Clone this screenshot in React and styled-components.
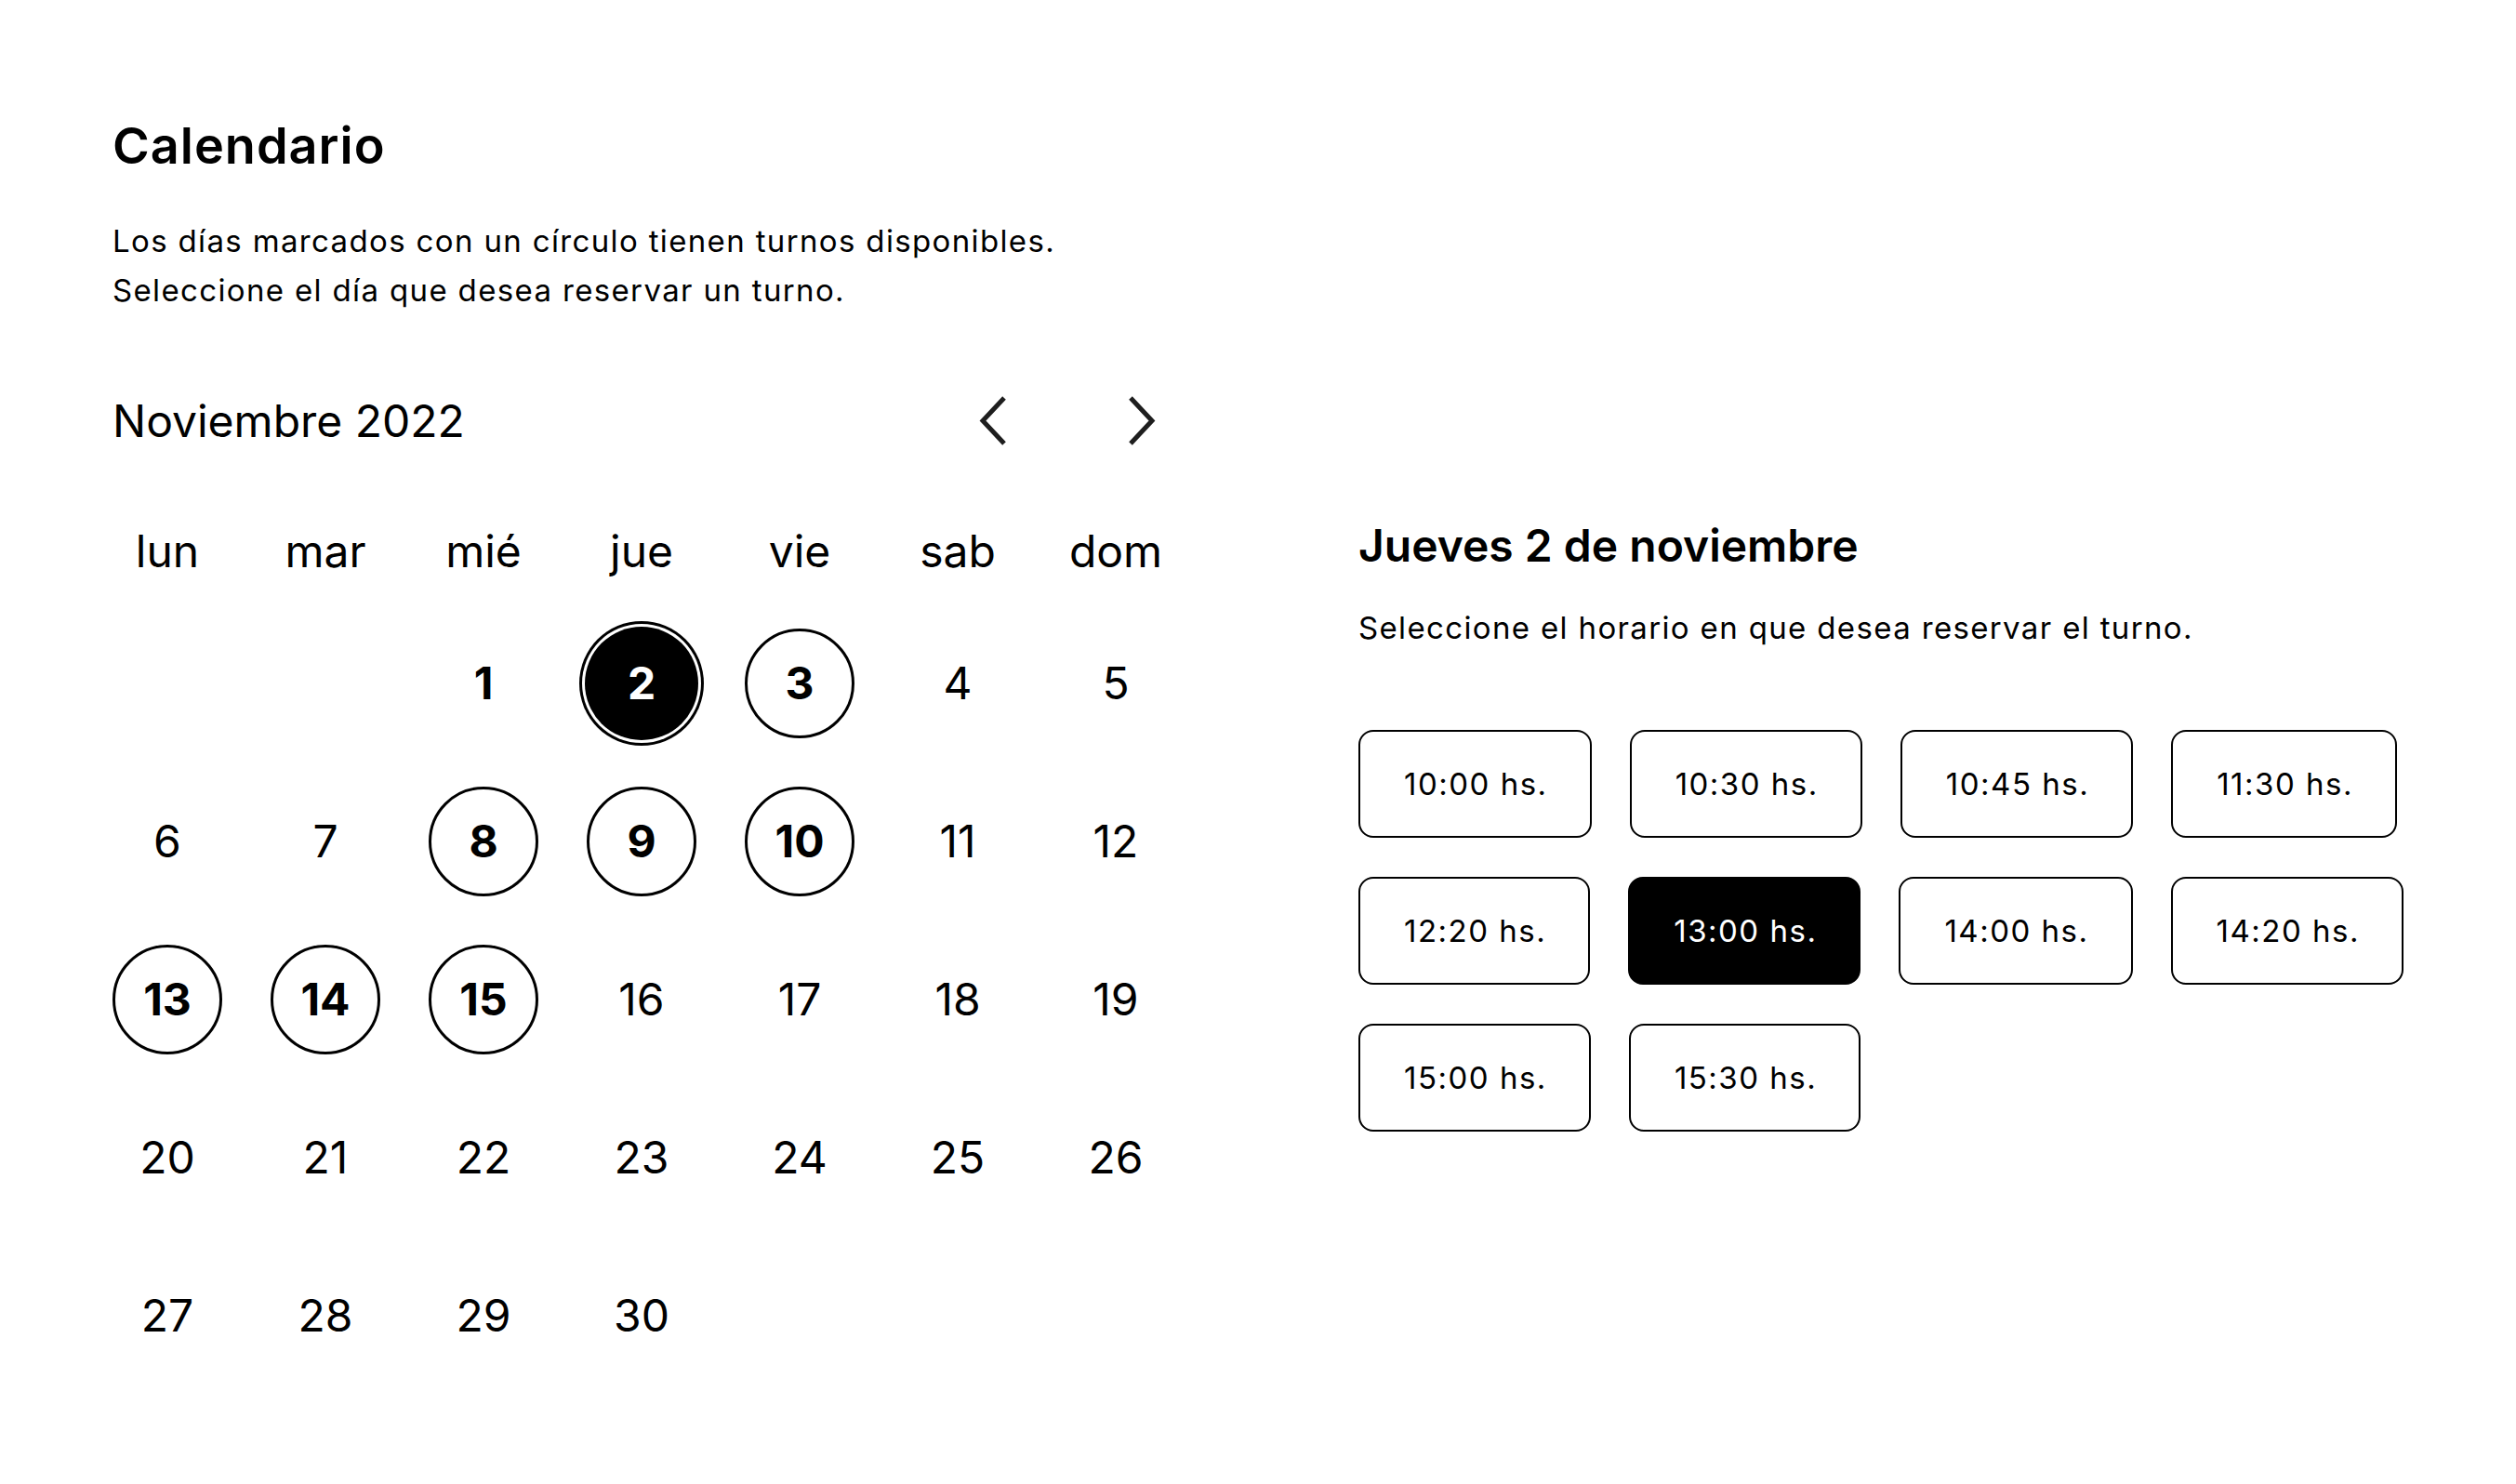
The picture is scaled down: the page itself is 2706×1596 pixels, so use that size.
import React, { useState } from 'react'
import styled, { createGlobalStyle } from 'styled-components'

const GlobalStyle = createGlobalStyle`
html, body {
  margin: 0;
  padding: 0;
  background: #ffffff;
}
body {
  font-family: Inter, "Noto Sans", "Liberation Sans", sans-serif;
  color: #000000;
}
`

const StyledPage = styled.main`
padding: 130px 0 0 121px;
min-height: 100vh;
box-sizing: border-box;
`
const StyledTitle = styled.h1`
margin: 0;
font-size: 54px;
line-height: 1;
font-weight: 600;
letter-spacing: 1px;
`
const StyledIntro = styled.p`
margin: 49px 0 0;
font-size: 33px;
line-height: 53px;
font-weight: 400;
letter-spacing: 1.35px;
`
const StyledContent = styled.div`
display: flex;
align-items: flex-start;
gap: 202px;
margin-top: 87px;
`

const StyledCalendar = styled.section`
width: 1138px;
`
const StyledCalendarHeader = styled.div`
display: flex;
align-items: center;
justify-content: space-between;
height: 53px;
`
const StyledMonth = styled.h2`
margin: 0;
font-size: 48px;
line-height: 1;
font-weight: 400;
`
const StyledNav = styled.div`
display: flex;
gap: 98px;
`
const StyledNavButton = styled.button`
width: 62px;
height: 53px;
padding: 0;
border: 0;
background: none;
display: flex;
align-items: center;
justify-content: center;
color: #1e1e1e;
cursor: pointer;
`
const StyledGrid = styled.div`
display: grid;
grid-template-columns: repeat(7, 118px);
column-gap: 52px;
row-gap: ${({ $rowGap }) => $rowGap}px;
margin-top: ${({ $top }) => $top}px;
`
const StyledWeekday = styled.div`
text-align: center;
font-size: 48px;
line-height: 1;
`
const StyledDay = styled.div`
width: 118px;
height: 118px;
box-sizing: border-box;
border-radius: 50%;
display: flex;
align-items: center;
justify-content: center;
font-size: 48px;
line-height: 1;
font-weight: ${({ $bold }) => ($bold ? 700 : 400)};
border: 3px solid ${({ $ring }) => ($ring ? '#000' : 'transparent')};
background: ${({ $selected }) => ($selected ? '#000' : 'transparent')};
color: ${({ $selected }) => ($selected ? '#fff' : '#000')};
box-shadow: ${({ $selected }) =>
    $selected ? '0 0 0 2px #000, 0 0 0 5px #fff, 0 0 0 8px #000' : 'none'};
`

const StyledPanel = styled.section`
padding-top: 137px;
`
const StyledPanelTitle = styled.h2`
margin: 0;
font-size: 48px;
line-height: 1;
font-weight: 600;
`
const StyledPanelText = styled.p`
margin: 48px 0 0;
font-size: 33px;
line-height: 1;
letter-spacing: 1.35px;
`
const StyledSlots = styled.div`
display: flex;
flex-wrap: wrap;
column-gap: 41px;
row-gap: 42px;
width: 1180px;
margin-top: 93px;
`
const StyledSlot = styled.button`
height: 116px;
padding: 0 45px 0 47px;
box-sizing: border-box;
border: 2px solid #000;
border-radius: 16px;
background: ${({ $active }) => ($active ? '#000' : '#fff')};
color: ${({ $active }) => ($active ? '#fff' : '#000')};
font-family: inherit;
font-size: 33px;
line-height: 1;
letter-spacing: 1.5px;
cursor: pointer;
`

const Chevron = ({ direction }) => (
  <svg width="30" height="53" viewBox="0 0 30 53" fill="none">
    <polyline
      points={direction === 'left' ? '27,2 4,26.5 27,51' : '3,2 26,26.5 3,51'}
      stroke="currentColor"
      strokeWidth="5"
    />
  </svg>
)

const weekdays = ['lun', 'mar', 'mié', 'jue', 'vie', 'sab', 'dom']
const available = [3, 8, 9, 10, 13, 14, 15]
const slots = ['10:00', '10:30', '10:45', '11:30', '12:20', '13:00', '14:00', '14:20', '15:00', '15:30']

const App = () => {
  const [selectedDay, setSelectedDay] = useState(2)
  const [selectedSlot, setSelectedSlot] = useState('13:00')

  const days = [null, null, ...Array.from({ length: 30 }, (_, i) => i + 1)]

  return (
    <>
      <GlobalStyle />
      <StyledPage>
        <StyledTitle>Calendario</StyledTitle>
        <StyledIntro>
          Los días marcados con un círculo tienen turnos disponibles.
          <br />
          Seleccione el día que desea reservar un turno.
        </StyledIntro>
        <StyledContent>
          <StyledCalendar>
            <StyledCalendarHeader>
              <StyledMonth>Noviembre 2022</StyledMonth>
              <StyledNav>
                <StyledNavButton aria-label="Mes anterior">
                  <Chevron direction="left" />
                </StyledNavButton>
                <StyledNavButton aria-label="Mes siguiente">
                  <Chevron direction="right" />
                </StyledNavButton>
              </StyledNav>
            </StyledCalendarHeader>
            <StyledGrid $top={90} $rowGap={0}>
              {weekdays.map((day) => <StyledWeekday key={day}>{day}</StyledWeekday>)}
            </StyledGrid>
            <StyledGrid $top={59} $rowGap={52}>
              {days.map((day, index) => {
                if (!day) return <div key={`e${index}`} />
                const isSelected = day === selectedDay
                const isAvailable = available.includes(day)
                return (
                  <StyledDay
                    key={day}
                    $ring={isAvailable || isSelected}
                    $selected={isSelected}
                    $bold={isAvailable || isSelected || day === 1}
                    onClick={() => isAvailable && setSelectedDay(day)}
                  >
                    {day}
                  </StyledDay>
                )
              })}
            </StyledGrid>
          </StyledCalendar>
          <StyledPanel>
            <StyledPanelTitle>Jueves 2 de noviembre</StyledPanelTitle>
            <StyledPanelText>Seleccione el horario en que desea reservar el turno.</StyledPanelText>
            <StyledSlots>
              {slots.map((slot) => (
                <StyledSlot
                  key={slot}
                  $active={slot === selectedSlot}
                  onClick={() => setSelectedSlot(slot)}
                >
                  {slot} hs.
                </StyledSlot>
              ))}
            </StyledSlots>
          </StyledPanel>
        </StyledContent>
      </StyledPage>
    </>
  )
}

export default App
